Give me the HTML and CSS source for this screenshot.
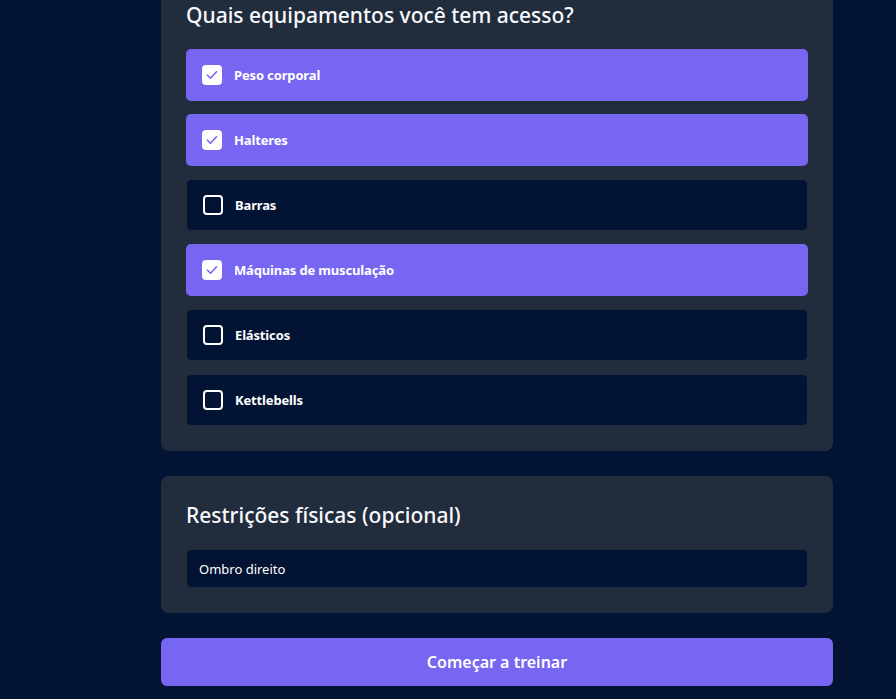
FILE: index.html
```html
<!DOCTYPE html>
<html lang="pt">
<head>
<meta charset="utf-8">
<link rel="stylesheet" href="styles.css">
</head>
<body>
<main class="page">
  <section class="card">
    <h2 class="card-title">Quais equipamentos você tem acesso?</h2>
    <div class="options">
      <label class="option checked"><span class="box"><svg viewBox="0 0 20 20" width="20" height="20"><path d="M5.5 10.2l3 3 6-6.4" fill="none" stroke="#7766f1" stroke-width="1.6" stroke-linecap="round" stroke-linejoin="round"/></svg></span><span class="label">Peso corporal</span></label>
      <label class="option checked"><span class="box"><svg viewBox="0 0 20 20" width="20" height="20"><path d="M5.5 10.2l3 3 6-6.4" fill="none" stroke="#7766f1" stroke-width="1.6" stroke-linecap="round" stroke-linejoin="round"/></svg></span><span class="label">Halteres</span></label>
      <label class="option"><span class="box"></span><span class="label">Barras</span></label>
      <label class="option checked"><span class="box"><svg viewBox="0 0 20 20" width="20" height="20"><path d="M5.5 10.2l3 3 6-6.4" fill="none" stroke="#7766f1" stroke-width="1.6" stroke-linecap="round" stroke-linejoin="round"/></svg></span><span class="label">Máquinas de musculação</span></label>
      <label class="option"><span class="box"></span><span class="label">Elásticos</span></label>
      <label class="option"><span class="box"></span><span class="label">Kettlebells</span></label>
    </div>
  </section>
  <section class="card">
    <h2 class="card-title">Restrições físicas (opcional)</h2>
    <div class="input">Ombro direito</div>
  </section>
  <button class="cta">Começar a treinar</button>
</main>
</body>
</html>
```
FILE: styles.css
```css
* { box-sizing: border-box; }
html, body { margin: 0; padding: 0; }
body {
  background: #031333;
  font-family: "Noto Sans", "Open Sans", sans-serif;
  color: #fff;
  height: 699px;
  overflow: hidden;
}
.page {
  display: flex;
  flex-direction: column;
  gap: 25px;
  width: 672px;
  margin: -24px 0 0 161px;
}
.card {
  background: #212c3d;
  border-radius: 8px;
  padding: 25px;
}
.card-title {
  margin: 0 0 20px;
  font-size: 21px;
  font-weight: 500;
  line-height: 28px;
  color: #f8f9fc;
}
.options {
  display: flex;
  flex-direction: column;
  gap: 13px;
}
.option {
  display: flex;
  align-items: center;
  gap: 12px;
  height: 52px;
  padding: 0 16px;
  border-radius: 5px;
  background: #031333;
  border: 1px solid #212c3d;
}
.option.checked {
  background: #7766f1;
  border: none;
}
.box {
  width: 20px;
  height: 20px;
  border: 2px solid #fff;
  border-radius: 4px;
  display: flex;
  align-items: center;
  justify-content: center;
  flex: none;
}
.option.checked .box {
  background: #fff;
  border: none;
}
.label {
  font-size: 13px;
  font-weight: 700;
  letter-spacing: -0.15px;
}
.input {
  background: #031333;
  border: 1px solid #212c3d;
  border-radius: 5px;
  height: 39px;
  padding: 0 12px;
  display: flex;
  align-items: center;
  font-size: 13px;
}
.cta {
  height: 48px;
  border: none;
  border-radius: 6px;
  background: #7766f1;
  color: #fff;
  font-family: inherit;
  font-size: 16px;
  font-weight: 600;
}
```
